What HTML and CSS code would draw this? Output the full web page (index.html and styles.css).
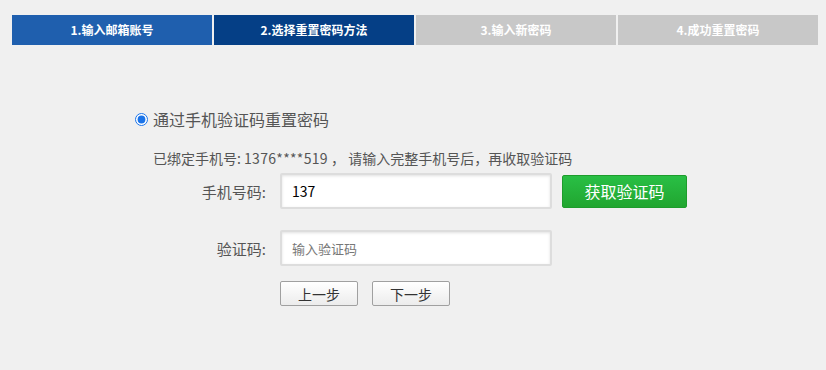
FILE: index.html
```html
<!DOCTYPE html>
<html lang="zh-CN">
<head>
    <meta charset="UTF-8">
    <meta name="viewport" content="width=device-width, initial-scale=1.0">
    <title>重置密码</title>
    <link rel="stylesheet" href="styles.css">
</head>
<body>

    <div class="steps">
        <div class="step done">1.输入邮箱账号</div>
        <div class="step current">2.选择重置密码方法</div>
        <div class="step">3.输入新密码</div>
        <div class="step">4.成功重置密码</div>
    </div>

    <div class="main">
        <label class="method">
            <input type="radio" name="method" checked>
            <span>通过手机验证码重置密码</span>
        </label>

        <p class="hint">已绑定手机号: <span class="phone">1376****519</span> ， 请输入完整手机号后，再收取验证码</p>

        <div class="row">
            <span class="label">手机号码:</span>
            <input class="text-input" type="text" value="137">
            <button class="code-btn">获取验证码</button>
        </div>

        <div class="row second">
            <span class="label">验证码:</span>
            <input class="text-input" type="text" placeholder="输入验证码">
        </div>

        <div class="actions">
            <button class="btn">上一步</button>
            <button class="btn">下一步</button>
        </div>
    </div>

</body>
</html>
```

FILE: styles.css
```css
body {
    margin: 0;
    background-color: #f0f0f0;
    font-family: "Noto Sans CJK SC", "Noto Sans", sans-serif;
    color: #555555;
}

.steps {
    display: flex;
    gap: 2px;
    padding: 15px 0 0 12px;
}

.step {
    flex-shrink: 0;
    width: 200px;
    height: 30px;
    line-height: 30px;
    text-align: center;
    font-size: 12px;
    font-weight: bold;
    color: #ffffff;
    background-color: #c8c8c8;
}

.step.done {
    background-color: #1f5fae;
}

.step.current {
    background-color: #053f86;
}

.main {
    padding-left: 135px;
    margin-top: 62px;
}

.method {
    display: flex;
    align-items: center;
    height: 24px;
    font-size: 16px;
    color: #555555;
}

.method input {
    width: 13px;
    height: 13px;
    margin: 0 5px 0 0;
    accent-color: #1a73e8;
}

.hint {
    margin: 17px 0 0 18px;
    font-size: 14px;
    line-height: 20px;
    color: #555555;
}

.phone {
    letter-spacing: 0.3px;
}

.row {
    display: flex;
    align-items: center;
    margin-top: 5px;
}

.row.second {
    margin-top: 21px;
}

.label {
    width: 131px;
    margin-right: 14px;
    text-align: right;
    font-size: 15px;
    color: #555555;
}

.text-input {
    width: 272px;
    height: 36px;
    box-sizing: border-box;
    border: 2px solid #dddddd;
    border-radius: 2px;
    padding: 0 10px;
    background-color: #ffffff;
    box-shadow: inset 0 1px 3px rgba(0, 0, 0, 0.12);
    font-family: "Noto Sans CJK SC", "Noto Sans", sans-serif;
    font-size: 14px;
    color: #000000;
    outline: none;
}

.text-input::placeholder {
    color: #777777;
    font-size: 13px;
}

.code-btn {
    width: 125px;
    height: 33px;
    margin-left: 10px;
    border: 1px solid #1e9c2c;
    border-radius: 2px;
    background: linear-gradient(#29bf45, #21a630);
    color: #ffffff;
    font-family: "Noto Sans CJK SC", "Noto Sans", sans-serif;
    font-size: 16px;
    cursor: pointer;
}

.actions {
    display: flex;
    gap: 14px;
    margin: 15px 0 0 145px;
}

.btn {
    width: 78px;
    height: 25px;
    padding: 0;
    border: 1px solid #a0a0a0;
    border-radius: 2px;
    background: linear-gradient(#ffffff, #ececec);
    color: #333333;
    font-family: "Noto Sans CJK SC", "Noto Sans", sans-serif;
    font-size: 14px;
    cursor: pointer;
}
```
